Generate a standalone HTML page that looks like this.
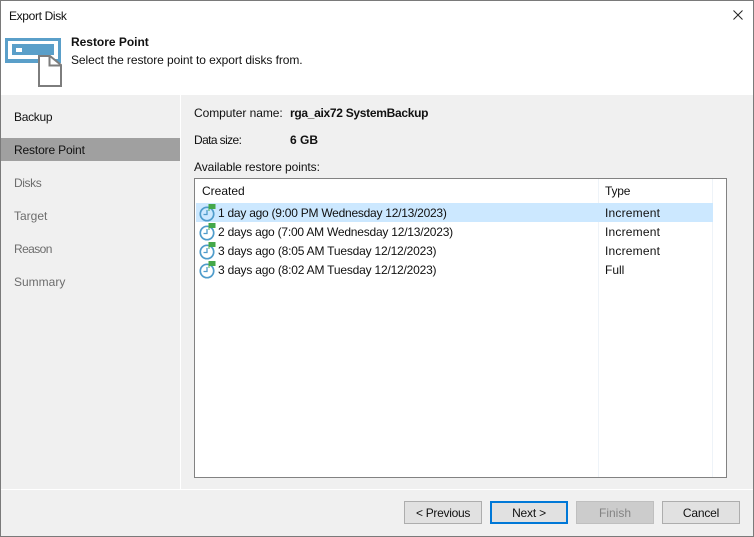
<!DOCTYPE html>
<html>
<head>
<meta charset="utf-8">
<style>
html,body{margin:0;padding:0;}
body{width:754px;height:537px;position:relative;overflow:hidden;background:#f0f0f0;font-family:"Liberation Sans",sans-serif;font-size:12px;color:#111;}
.a{position:absolute;white-space:nowrap;line-height:14px;}
.b{position:absolute;box-sizing:border-box;}
.btn{position:absolute;top:501px;width:78px;height:23px;box-sizing:border-box;background:#e1e1e1;border:1px solid #adadad;text-align:center;line-height:23px;}
.ic{position:absolute;left:199px;width:18px;height:20px;}
</style>
</head>
<body>
<div class="b" style="left:0;top:0;width:754px;height:95px;background:#fff;"></div>
<div class="a" style="left:9px;top:9px;letter-spacing:-.35px;">Export Disk</div>
<svg class="b" style="left:731px;top:8px;" width="14" height="14"><path d="M2.500 2.500L11.500 11.500M11.500 2.500L2.500 11.500" stroke="#222" stroke-width="1" fill="none"/></svg>
<svg class="b" style="left:5px;top:37px;" width="60" height="52">
<rect x="0" y="1" width="56" height="25" fill="#5a9fc9"/>
<rect x="3" y="4" width="50" height="18" fill="#fff"/>
<rect x="7" y="7" width="42" height="11" fill="#5a9fc9"/>
<rect x="11" y="11" width="6" height="4" fill="#fff"/>
<path d="M34 19H45L56 28V49H34Z" fill="#fff" stroke="#7d7d7d" stroke-width="2"/>
<path d="M44.500 19V28.500H56" fill="none" stroke="#7d7d7d" stroke-width="2"/>
</svg>
<div class="a" style="left:71px;top:35px;font-weight:bold;letter-spacing:-.02px;">Restore Point</div>
<div class="a" style="left:71px;top:53px;letter-spacing:-.07px;">Select the restore point to export disks from.</div>

<div class="b" style="left:0;top:95px;width:180px;height:394px;background:#f0f0f0;"></div>
<div class="b" style="left:180px;top:95px;width:1px;height:394px;background:#fff;"></div>
<div class="b" style="left:0;top:138px;width:180px;height:23px;background:#a0a0a0;"></div>
<div class="a" style="left:14px;top:110px;letter-spacing:-.3px;">Backup</div>
<div class="a" style="left:14px;top:143px;letter-spacing:-.15px;">Restore Point</div>
<div class="a" style="left:14px;top:176px;color:#6d6d6d;letter-spacing:-.4px;">Disks</div>
<div class="a" style="left:14px;top:209px;color:#6d6d6d;">Target</div>
<div class="a" style="left:14px;top:242px;color:#6d6d6d;letter-spacing:-.6px;">Reason</div>
<div class="a" style="left:14px;top:275px;color:#6d6d6d;">Summary</div>

<div class="a" style="left:194px;top:106px;letter-spacing:-.05px;">Computer name:</div>
<div class="a" style="left:290px;top:106px;font-weight:bold;letter-spacing:-.3px;">rga_aix72 SystemBackup</div>
<div class="a" style="left:194px;top:133px;letter-spacing:-.6px;">Data size:</div>
<div class="a" style="left:290px;top:133px;font-weight:bold;">6 GB</div>
<div class="a" style="left:194px;top:160px;letter-spacing:-.08px;">Available restore points:</div>

<div class="b" style="left:194px;top:178px;width:533px;height:300px;background:#fff;border:1px solid #828282;"></div>
<div class="b" style="left:598px;top:179px;width:1px;height:298px;background:#eef3f8;"></div>
<div class="b" style="left:712px;top:179px;width:1px;height:298px;background:#eef3f8;"></div>
<div class="b" style="left:196px;top:203px;width:517px;height:19px;background:#cce8ff;"></div>
<div class="a" style="left:202px;top:184px;">Created</div>
<div class="a" style="left:605px;top:184px;letter-spacing:-.2px;">Type</div>

<svg class="ic" style="top:203px;" viewBox="0 0 18 20"><circle cx="8" cy="11" r="6.700" fill="none" stroke="#4f9ccb" stroke-width="1.700"/><path d="M8 7V11.500H4.500" fill="none" stroke="#4f9ccb" stroke-width="1.300"/><path d="M9.500 1H16.500V6H10.500V8H9.500Z" fill="#45a84a"/></svg>
<svg class="ic" style="top:222px;" viewBox="0 0 18 20"><circle cx="8" cy="11" r="6.700" fill="none" stroke="#4f9ccb" stroke-width="1.700"/><path d="M8 7V11.500H4.500" fill="none" stroke="#4f9ccb" stroke-width="1.300"/><path d="M9.500 1H16.500V6H10.500V8H9.500Z" fill="#45a84a"/></svg>
<svg class="ic" style="top:241px;" viewBox="0 0 18 20"><circle cx="8" cy="11" r="6.700" fill="none" stroke="#4f9ccb" stroke-width="1.700"/><path d="M8 7V11.500H4.500" fill="none" stroke="#4f9ccb" stroke-width="1.300"/><path d="M9.500 1H16.500V6H10.500V8H9.500Z" fill="#45a84a"/></svg>
<svg class="ic" style="top:260px;" viewBox="0 0 18 20"><circle cx="8" cy="11" r="6.700" fill="none" stroke="#4f9ccb" stroke-width="1.700"/><path d="M8 7V11.500H4.500" fill="none" stroke="#4f9ccb" stroke-width="1.300"/><path d="M9.500 1H16.500V6H10.500V8H9.500Z" fill="#45a84a"/></svg>

<div class="a" style="left:218px;top:206px;letter-spacing:-.25px;">1 day ago (9:00 PM Wednesday 12/13/2023)</div>
<div class="a" style="left:605px;top:206px;letter-spacing:.2px;">Increment</div>
<div class="a" style="left:218px;top:225px;letter-spacing:-.22px;">2 days ago (7:00 AM Wednesday 12/13/2023)</div>
<div class="a" style="left:605px;top:225px;letter-spacing:.2px;">Increment</div>
<div class="a" style="left:218px;top:244px;letter-spacing:-.2px;">3 days ago (8:05 AM Tuesday 12/12/2023)</div>
<div class="a" style="left:605px;top:244px;letter-spacing:.2px;">Increment</div>
<div class="a" style="left:218px;top:263px;letter-spacing:-.2px;">3 days ago (8:02 AM Tuesday 12/12/2023)</div>
<div class="a" style="left:605px;top:263px;">Full</div>

<div class="b" style="left:0;top:489px;width:754px;height:1px;background:#fff;"></div>
<div class="btn" style="left:404px;letter-spacing:-.3px;">&lt; Previous</div>
<div class="btn" style="left:490px;border:2px solid #0078d7;line-height:21px;letter-spacing:-.2px;">Next &gt;</div>
<div class="btn" style="left:576px;background:#cccccc;border-color:#bfbfbf;color:#838383;">Finish</div>
<div class="btn" style="left:662px;letter-spacing:-.2px;">Cancel</div>

<div class="b" style="left:0;top:0;width:754px;height:537px;border:1px solid #7a7a7a;"></div>
</body>
</html>
